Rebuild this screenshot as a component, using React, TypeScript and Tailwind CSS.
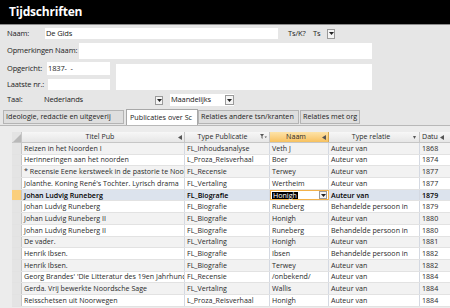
const rows: [string, string, string, string, string][] = [
  ['Reizen in het Noorden I', 'FL_Inhoudsanalyse', 'Veth J', 'Auteur van', '1868'],
  ['Herinneringen aan het noorden', 'L_Proza_Reisverhaal', 'Boer', 'Auteur van', '1874'],
  ['* Recensie Eene kerstweek in de pastorie te Noorwegen', 'FL_Recensie', 'Terwey', 'Auteur van', '1877'],
  ["Jolanthe. Koning René's Tochter. Lyrisch drama", 'FL_Vertaling', 'Wertheim', 'Auteur van', '1877'],
  ['Johan Ludvig Runeberg', 'FL_Biografie', 'Honigh', 'Auteur van', '1879'],
  ['Johan Ludvig Runeberg', 'FL_Biografie', 'Runeberg', 'Behandelde persoon in', '1879'],
  ['Johan Ludvig Runeberg II', 'FL_Biografie', 'Honigh', 'Auteur van', '1880'],
  ['Johan Ludvig Runeberg II', 'FL_Biografie', 'Runeberg', 'Behandelde persoon in', '1880'],
  ['De vader.', 'FL_Vertaling', 'Honigh', 'Auteur van', '1881'],
  ['Henrik Ibsen.', 'FL_Biografie', 'Ibsen', 'Behandelde persoon in', '1882'],
  ['Henrik Ibsen.', 'FL_Biografie', 'Terwey', 'Auteur van', '1882'],
  ["Georg Brandes' 'Die Litteratur des 19en Jahrhunderts'", 'FL_Recensie', '/onbekend/', 'Auteur van', '1884'],
  ['Gerda. Vrij bewerkte Noordsche Sage', 'FL_Vertaling', 'Wallis', 'Auteur van', '1884'],
  ['Reisschetsen uit Noorwegen', 'L_Proza_Reisverhaal', 'Honigh', 'Auteur van', '1884'],
]

const DropBtn = ({ className = '' }: { className?: string }) => (
  <span className={`flex shrink-0 items-center justify-center border border-[#9a9a9a] bg-[#f4f4f4] ${className}`}>
    <svg width="5" height="3" viewBox="0 0 5 3">
      <path d="M0 0h5L2.5 3z" fill="#222" />
    </svg>
  </span>
)

const SortArrow = () => (
  <svg width="4" height="5" viewBox="0 0 4 5" className="shrink-0">
    <path d="M4 0v5L0 2.5z" fill="#555" />
  </svg>
)

const App = () => {
  return (
    <div className="w-[450px] h-[308px] overflow-hidden bg-[#e6e6e6] font-['Open_Sans',sans-serif] text-[#222]">

      <header className="h-[25px] bg-black border-b border-[#8c8c8c] flex items-center pl-[9px]">
        <span className="text-[12px] font-bold text-white tracking-[-0.2px] leading-none">Tijdschriften</span>
      </header>

      <div className="pl-[7px] text-[7.5px] tracking-[-0.15px] leading-none whitespace-nowrap">
        <div className="mt-[3px] flex items-center h-[11px]">
          <span className="w-[38px] shrink-0">Naam:</span>
          <div className="w-[233px] h-[11px] bg-white flex items-center pl-[1px]">De Gids</div>
          <span className="ml-[10px] w-[25px] shrink-0">Ts/K?</span>
          <div className="w-[22px] h-[11px] flex items-center justify-between">
            <span>Ts</span>
            <DropBtn className="w-[8px] h-[10px]" />
          </div>
        </div>

        <div className="mt-[4px] flex items-center h-[16px]">
          <span className="w-[72px] shrink-0">Opmerkingen Naam:</span>
          <div className="w-[293px] h-[16px] bg-white" />
        </div>

        <div className="mt-[3px] flex">
          <div className="w-[109px] shrink-0">
            <div className="flex items-center h-[13px]">
              <span className="w-[40px] shrink-0">Opgericht:</span>
              <div className="w-[63px] h-[13px] bg-white flex items-center pl-[1px] whitespace-pre">1837-  -</div>
            </div>
            <div className="mt-[4px] flex items-center h-[11px]">
              <span className="w-[41px] shrink-0">Laatste nr.:</span>
              <div className="w-[62px] h-[11px] bg-white" />
            </div>
          </div>
          <div className="mt-[2px] w-[256px] h-[26px] bg-white" />
        </div>

        <div className="mt-[4px] flex items-center h-[12px]">
          <span className="w-[36px] shrink-0">Taal:</span>
          <div className="w-[120px] h-[12px] flex items-center justify-between pl-[1px]">
            <span>Nederlands</span>
            <DropBtn className="w-[8px] h-[9px]" />
          </div>
          <div className="ml-[7px] w-[64px] h-[12px] bg-white flex items-center justify-between pl-[1px]">
            <span>Maandelijks</span>
            <DropBtn className="w-[9px] h-[10px]" />
          </div>
        </div>
      </div>

      <div className="mt-[3px] h-[16px] flex items-end pl-[3px] text-[7.2px] leading-none">
        <div className="w-[121px] h-[14px] mb-[1px] bg-[#dedede] border border-[#b4b4b4] flex items-center pl-[2px] whitespace-nowrap overflow-hidden">
          Ideologie, redactie en uitgeverij
        </div>
        <div className="ml-[2px] w-[72px] h-[16px] bg-white border border-b-0 border-[#a8a8a8] flex items-center pl-[3px] whitespace-nowrap overflow-hidden">
          Publicaties over Sc
        </div>
        <div className="w-[101px] h-[14px] mb-[1px] bg-[#dedede] border border-[#b4b4b4] flex items-center pl-[2px] whitespace-nowrap overflow-hidden">
          Relaties andere tsn/kranten
        </div>
        <div className="ml-[1px] w-[60px] h-[14px] mb-[1px] bg-[#dedede] border border-[#b4b4b4] flex items-center pl-[2px] whitespace-nowrap overflow-hidden">
          Relaties met org
        </div>
      </div>

      <div className="border-t border-[#b8b8b8] bg-[#ececec] pt-[6px] pl-[12px] h-[200px]">
        <div className="w-[500px] text-[7.1px] leading-none text-[#2a2a2a]">
          <div className="flex h-[11px] border-b border-[#c6c6c6]">
            <div className="w-[10px] bg-[#e4e4e4] border-r border-[#c6c6c6] relative overflow-hidden">
              <svg width="10" height="11" viewBox="0 0 10 11" className="absolute inset-0">
                <path d="M9 2v8H1z" fill="#b9b9b9" />
              </svg>
            </div>
            <div className="w-[163px] bg-gradient-to-b from-[#f7f7f7] to-[#e6e6e6] border-r border-[#c6c6c6] flex items-center pr-[2px]">
              <span className="flex-1 text-center">Titel Pub</span>
              <SortArrow />
            </div>
            <div className="w-[85px] bg-gradient-to-b from-[#f7f7f7] to-[#e6e6e6] border-r border-[#c6c6c6] flex items-center pr-[2px]">
              <span className="flex-1 text-center">Type Publicatie</span>
              <svg width="7" height="6" viewBox="0 0 7 6" className="shrink-0">
                <path d="M0 0h4L2.5 2v3L1.5 4V2z" fill="#555" />
                <path d="M4.5 2.5h2.5L5.75 4z" fill="#555" />
              </svg>
            </div>
            <div className="w-[59px] bg-gradient-to-b from-[#fde3a8] to-[#f7c15e] border-r border-[#d8a84e] flex items-center pr-[2px]">
              <span className="flex-1 text-center">Naam</span>
              <SortArrow />
            </div>
            <div className="w-[91px] bg-gradient-to-b from-[#f7f7f7] to-[#e6e6e6] border-r border-[#c6c6c6] flex items-center pr-[3px]">
              <span className="flex-1 text-center">Type relatie</span>
              <svg width="3" height="3" viewBox="0 0 3 3" className="shrink-0">
                <path d="M0 0h3L1.5 3z" fill="#555" />
              </svg>
            </div>
            <div className="w-[40px] bg-gradient-to-b from-[#f7f7f7] to-[#e6e6e6] flex items-center pl-[2px] gap-[2px]">
              <span>Datu</span>
              <SortArrow />
            </div>
          </div>

          {rows.map((r, i) => {
            const sel = i === 4
            const bg = sel ? 'bg-[#dce3ed]' : i % 2 === 0 ? 'bg-[#f2f2f2]' : 'bg-white'
            const weight = sel ? 'font-semibold text-black' : ''
            return (
              <div key={i} className={`flex h-[11.7px] border-b border-[#e2e2e2] ${bg} ${weight}`}>
                <div className={`w-[10px] border-r border-[#c6c6c6] ${sel ? 'bg-[#fbcf7c]' : 'bg-[#e4e4e4]'}`} />
                <div className="w-[163px] border-r border-[#d4d9e2] flex items-center pl-[2px] whitespace-nowrap overflow-hidden">{r[0]}</div>
                <div className="w-[85px] border-r border-[#d4d9e2] flex items-center pl-[2px] whitespace-nowrap overflow-hidden">{r[1]}</div>
                {sel ? (
                  <div className="w-[59px] bg-white border border-[#f3b24a] flex items-center pl-[1px] pr-[1px] justify-between">
                    <span className="bg-black text-white px-[1px] font-normal">{r[2]}</span>
                    <DropBtn className="w-[8px] h-[8px]" />
                  </div>
                ) : (
                  <div className="w-[59px] border-r border-[#d4d9e2] flex items-center pl-[2px] whitespace-nowrap overflow-hidden">{r[2]}</div>
                )}
                <div className="w-[91px] border-r border-[#d4d9e2] flex items-center pl-[2px] whitespace-nowrap overflow-hidden">{r[3]}</div>
                <div className="w-[40px] flex items-center pl-[2px]">{r[4]}</div>
              </div>
            )
          })}
        </div>
      </div>
    </div>
  )
}

export default App
